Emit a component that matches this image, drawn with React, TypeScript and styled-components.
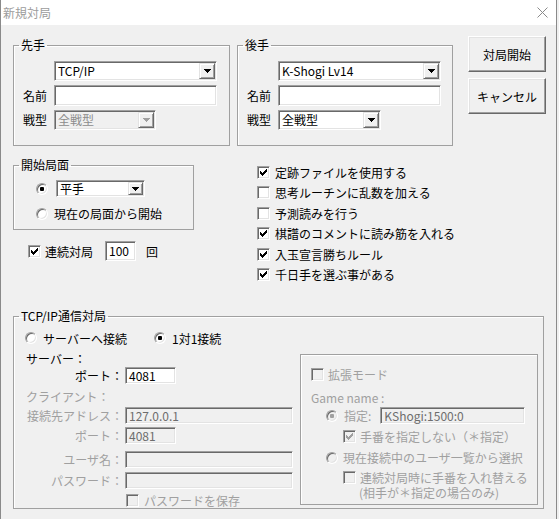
import React from 'react';
import styled, { createGlobalStyle } from 'styled-components';

const GlobalStyle = createGlobalStyle`
  html, body { margin: 0; padding: 0; background: #f0f0f0; }
  body {
    font-family: "Noto Sans CJK JP", "Noto Sans", sans-serif;
    font-size: 12px;
    color: #000;
  }
`;

const Window = styled.div`
  width: 557px;
  height: 519px;
  box-sizing: border-box;
  border-left: 1px solid #8a8a8a;
  border-right: 1px solid #8a8a8a;
  display: flex;
  flex-direction: column;
  background: #f0f0f0;
  overflow: hidden;
`;

const TitleBar = styled.div`
  height: 25px;
  flex: none;
  background: #fff;
  display: flex;
  align-items: center;
  justify-content: space-between;
  padding: 0 8px 0 2px;
`;

const TitleText = styled.span`
  color: #9c9c9c;
  font-size: 12px;
  line-height: 14px;
`;

const Body = styled.div`
  flex: 1;
  padding-left: 12px;
  display: flex;
  flex-direction: column;
`;

const Row = styled.div<{ $mt?: number; $gap?: number }>`
  display: flex;
  align-items: flex-start;
  margin-top: ${(p) => p.$mt ?? 0}px;
  gap: ${(p) => p.$gap ?? 0}px;
`;

const Column = styled.div<{ $mt?: number; $ml?: number; $w?: number }>`
  display: flex;
  flex-direction: column;
  margin-top: ${(p) => p.$mt ?? 0}px;
  margin-left: ${(p) => p.$ml ?? 0}px;
  ${(p) => (p.$w ? `width: ${p.$w}px;` : '')}
`;

const Group = styled.fieldset<{ $w: number; $mt?: number }>`
  margin: ${(p) => p.$mt ?? 0}px 0 0 0;
  padding: 0;
  min-width: 0;
  box-sizing: border-box;
  width: ${(p) => p.$w}px;
  border: 1px solid #a0a0a0;
  box-shadow: 1px 1px 0 #fff inset;
`;

const Legend = styled.legend`
  padding: 0 2px;
  margin-left: 5px;
  line-height: 14px;
  font-size: 12px;
`;

const PlayerGrid = styled.div`
  display: grid;
  grid-template-columns: 31px auto;
  row-gap: 4px;
  align-items: center;
  justify-items: start;
  padding: 9px 0 15px 9px;
`;

const Label = styled.span<{ $disabled?: boolean; $right?: boolean }>`
  line-height: 14px;
  white-space: nowrap;
  color: ${(p) => (p.$disabled ? '#a0a0a0' : '#000')};
  ${(p) => (p.$right ? 'justify-self: end;' : '')}
`;

const Sunken = styled.div<{ $w: number; $h: number; $disabled?: boolean }>`
  box-sizing: border-box;
  width: ${(p) => p.$w}px;
  height: ${(p) => p.$h}px;
  border: 1px solid;
  border-color: #a0a0a0 #fff #fff #a0a0a0;
  box-shadow: inset 1px 1px 0 #696969, inset -1px -1px 0 #e3e3e3;
  background: ${(p) => (p.$disabled ? '#f0f0f0' : '#fff')};
  display: flex;
  align-items: stretch;
  padding: 1px;
  flex: none;
`;

const FieldValue = styled.span<{ $disabled?: boolean; $muted?: boolean }>`
  flex: 1;
  display: flex;
  align-items: center;
  padding-left: 2px;
  white-space: nowrap;
  color: ${(p) => (p.$muted ? '#8c8c8c' : p.$disabled ? '#6d6d6d' : '#000')};
  line-height: 12px;
`;

const ArrowButton = styled.span<{ $w: number }>`
  width: ${(p) => p.$w}px;
  box-sizing: border-box;
  border: 1px solid;
  border-color: #e3e3e3 #696969 #696969 #e3e3e3;
  box-shadow: inset 1px 1px 0 #fff, inset -1px -1px 0 #a0a0a0;
  background: #f0f0f0;
  display: flex;
  align-items: center;
  justify-content: center;
`;

const Combo = ({ w, h, value, disabled, bw = 16 }: { w: number; h: number; value: string; disabled?: boolean; bw?: number }) => (
  <Sunken $w={w} $h={h} $disabled={disabled}>
    <FieldValue $muted={disabled}>{value}</FieldValue>
    <ArrowButton $w={bw}>
      <svg width="7" height="4" viewBox="0 0 7 4" shapeRendering="crispEdges">
        <polygon points="0,0 7,0 3.5,4" fill={disabled ? '#a0a0a0' : '#000'} />
      </svg>
    </ArrowButton>
  </Sunken>
);

const TextBox = ({ w, h, value = '', disabled }: { w: number; h: number; value?: string; disabled?: boolean }) => (
  <Sunken $w={w} $h={h} $disabled={disabled}>
    <FieldValue $disabled={disabled}>{value}</FieldValue>
  </Sunken>
);

const PushButton = styled.button`
  width: 78px;
  height: 36px;
  box-sizing: border-box;
  background: #f0f0f0;
  border: 1px solid;
  border-color: #fff #696969 #696969 #fff;
  box-shadow: inset -1px -1px 0 #a0a0a0, inset 1px 1px 0 #e3e3e3;
  font-family: inherit;
  font-size: 12px;
  color: #000;
  padding: 0;
`;

const ButtonColumn = styled.div`
  display: flex;
  flex-direction: column;
  gap: 6px;
  margin-top: 11px;
  margin-left: 15px;
`;

const CheckBoxBox = styled.span<{ $disabled?: boolean }>`
  width: 13px;
  height: 13px;
  box-sizing: border-box;
  flex: none;
  border: 1px solid;
  border-color: #a0a0a0 #fff #fff #a0a0a0;
  box-shadow: inset 1px 1px 0 #696969, inset -1px -1px 0 #e3e3e3;
  background: ${(p) => (p.$disabled ? '#f0f0f0' : '#fff')};
  display: flex;
  align-items: center;
  justify-content: center;
`;

const Check = ({ checked, disabled }: { checked?: boolean; disabled?: boolean }) => (
  <CheckBoxBox $disabled={disabled}>
    {checked && (
      <svg width="7" height="7" viewBox="0 0 7 7" shapeRendering="crispEdges">
        {[2, 3, 4, 3, 2, 1, 0].map((y, x) => (
          <rect key={x} x={x} y={y} width="1" height="3" fill={disabled ? '#a0a0a0' : '#000'} />
        ))}
      </svg>
    )}
  </CheckBoxBox>
);

const RadioCircle = styled.span<{ $disabled?: boolean }>`
  width: 12px;
  height: 12px;
  box-sizing: border-box;
  flex: none;
  border-radius: 50%;
  border: 1px solid;
  border-color: #a0a0a0 #fff #fff #a0a0a0;
  box-shadow: inset 1px 1px 0 #696969, inset -1px -1px 0 #e3e3e3;
  background: ${(p) => (p.$disabled ? '#f0f0f0' : '#fff')};
  display: flex;
  align-items: center;
  justify-content: center;
`;

const RadioDot = styled.span<{ $disabled?: boolean }>`
  width: 4px;
  height: 4px;
  border-radius: 1px;
  background: ${(p) => (p.$disabled ? '#a0a0a0' : '#000')};
`;

const Radio = ({ checked, disabled }: { checked?: boolean; disabled?: boolean }) => (
  <RadioCircle $disabled={disabled}>{checked && <RadioDot $disabled={disabled} />}</RadioCircle>
);

const OptionRow = styled.div<{ $h?: number; $mt?: number; $ml?: number; $gap?: number }>`
  display: flex;
  align-items: center;
  height: ${(p) => p.$h ?? 14}px;
  margin-top: ${(p) => p.$mt ?? 0}px;
  margin-left: ${(p) => p.$ml ?? 0}px;
  gap: ${(p) => p.$gap ?? 5}px;
  white-space: nowrap;
`;

const Spacer = styled.span<{ $w: number }>`
  display: flex;
  align-items: center;
  margin-left: ${(p) => p.$w}px;
`;

const StartInner = styled.div`
  display: flex;
  flex-direction: column;
  padding: 8px 0 7px 22px;
`;

const OptionList = styled.div`
  display: flex;
  flex-direction: column;
`;

const OptionItem = styled.div`
  display: flex;
  align-items: center;
  gap: 5px;
  height: 20.5px;
  white-space: nowrap;
`;

const TcpInner = styled.div`
  display: flex;
  align-items: flex-start;
  padding: 9px 4px 0 11px;
  height: 185px;
  box-sizing: border-box;
`;

const FormGrid = styled.div<{ $mt?: number }>`
  display: grid;
  grid-template-columns: 98px auto;
  column-gap: 2px;
  align-items: center;
  justify-items: start;
  margin-top: ${(p) => p.$mt ?? 0}px;
`;

const RadioOption = styled.div<{ $w?: number }>`
  display: flex;
  align-items: center;
  gap: 6px;
  ${(p) => (p.$w ? `width: ${p.$w}px;` : '')}
`;

const ExtBox = styled.div`
  width: 238px;
  height: 151px;
  box-sizing: border-box;
  border: 1px solid #a0a0a0;
  box-shadow: 1px 1px 0 #fff inset;
  margin: 22px 0 0 7px;
  padding: 13px 0 0 10px;
  display: flex;
  flex-direction: column;
  color: #a0a0a0;
`;

const GrayText = styled.span`
  color: #a0a0a0;
  line-height: 14px;
`;

const CheckItems = [
  { label: '定跡ファイルを使用する', checked: true },
  { label: '思考ルーチンに乱数を加える', checked: false },
  { label: '予測読みを行う', checked: false },
  { label: '棋譜のコメントに読み筋を入れる', checked: true },
  { label: '入玉宣言勝ちルール', checked: true },
  { label: '千日手を選ぶ事がある', checked: true },
];

const PlayerGroup = ({ title, combo, senkei, senkeiDisabled, senkeiW }: { title: string; combo: string; senkei: string; senkeiDisabled?: boolean; senkeiW: number }) => (
  <Group $w={title === '先手' ? 217 : 216}>
    <Legend>{title}</Legend>
    <PlayerGrid>
      <span />
      <Combo w={163} h={20} value={combo} />
      <Label>名前</Label>
      <TextBox w={163} h={21} />
      <Label>戦型</Label>
      <Combo w={senkeiW} h={20} value={senkei} disabled={senkeiDisabled} />
    </PlayerGrid>
  </Group>
);

export default function App() {
  return (
    <>
      <GlobalStyle />
      <Window>
        <TitleBar>
          <TitleText>新規対局</TitleText>
          <svg width="11" height="11" viewBox="0 0 11 11">
            <path d="M0.5 0.5 L10.5 10.5 M10.5 0.5 L0.5 10.5" stroke="#8a8a8a" strokeWidth="1" />
          </svg>
        </TitleBar>
        <Body>
          <Row>
            <Row $mt={13} $gap={7}>
              <PlayerGroup title="先手" combo="TCP/IP" senkei="全戦型" senkeiDisabled senkeiW={102} />
              <PlayerGroup title="後手" combo="K-Shogi Lv14" senkei="全戦型" senkeiW={103} />
            </Row>
            <ButtonColumn>
              <PushButton>対局開始</PushButton>
              <PushButton>キャンセル</PushButton>
            </ButtonColumn>
          </Row>

          <Row>
            <Column $w={181}>
              <Group $w={181} $mt={12}>
                <Legend>開始局面</Legend>
                <StartInner>
                  <OptionRow $h={17} $gap={8}>
                    <Radio checked />
                    <Combo w={89} h={17} value="平手" bw={15} />
                  </OptionRow>
                  <OptionRow $h={17} $mt={8} $gap={6}>
                    <Radio />
                    <span>現在の局面から開始</span>
                  </OptionRow>
                </StartInner>
              </Group>
              <OptionRow $h={20} $mt={11} $ml={15} $gap={4}>
                <Check checked />
                <span>連続対局</span>
                <Spacer $w={8}>
                  <TextBox w={31} h={20} value="100" />
                </Spacer>
                <Spacer $w={6}>回</Spacer>
              </OptionRow>
            </Column>
            <Column $mt={16} $ml={63}>
              <OptionList>
                {CheckItems.map((c) => (
                  <OptionItem key={c.label}>
                    <Check checked={c.checked} />
                    <span>{c.label}</span>
                  </OptionItem>
                ))}
              </OptionList>
            </Column>
          </Row>

          <Group $w={531} $mt={24}>
            <Legend>TCP/IP通信対局</Legend>
            <TcpInner>
              <Column $w={268}>
                <OptionRow $h={12} $gap={0}>
                  <RadioOption $w={129}>
                    <Radio />
                    <span>サーバーへ接続</span>
                  </RadioOption>
                  <RadioOption>
                    <Radio checked />
                    <span>1対1接続</span>
                  </RadioOption>
                </OptionRow>
                <OptionRow $mt={7} $ml={1}>
                  <span>サーバー：</span>
                </OptionRow>
                <FormGrid $mt={2}>
                  <Label $right>ポート：</Label>
                  <TextBox w={51} h={17} value="4081" />
                </FormGrid>
                <OptionRow $mt={6} $ml={1}>
                  <GrayText>クライアント：</GrayText>
                </OptionRow>
                <FormGrid $mt={3}>
                  <Label $right $disabled>接続先アドレス：</Label>
                  <TextBox w={168} h={17} value="127.0.0.1" disabled />
                </FormGrid>
                <FormGrid $mt={3}>
                  <Label $right $disabled>ポート：</Label>
                  <TextBox w={51} h={17} value="4081" disabled />
                </FormGrid>
                <FormGrid $mt={7}>
                  <Label $right $disabled>ユーザ名：</Label>
                  <TextBox w={168} h={17} disabled />
                </FormGrid>
                <FormGrid $mt={4}>
                  <Label $right $disabled>パスワード：</Label>
                  <TextBox w={168} h={17} disabled />
                </FormGrid>
                <FormGrid $mt={5}>
                  <span />
                  <OptionRow $h={13} $ml={1} $gap={5}>
                    <Check disabled />
                    <GrayText>パスワードを保存</GrayText>
                  </OptionRow>
                </FormGrid>
              </Column>
              <ExtBox>
                <OptionRow $h={13} $gap={4}>
                  <Check disabled />
                  <GrayText>拡張モード</GrayText>
                </OptionRow>
                <OptionRow $mt={10}>
                  <GrayText>Game name :</GrayText>
                </OptionRow>
                <OptionRow $h={17} $mt={2} $ml={15} $gap={6}>
                  <Radio checked disabled />
                  <GrayText>指定:</GrayText>
                  <Spacer $w={3}>
                    <TextBox w={145} h={17} value="KShogi:1500:0" disabled />
                  </Spacer>
                </OptionRow>
                <OptionRow $h={13} $mt={6} $ml={32} $gap={4}>
                  <Check checked disabled />
                  <GrayText>手番を指定しない（＊指定）</GrayText>
                </OptionRow>
                <OptionRow $h={14} $mt={8} $ml={15} $gap={5}>
                  <Radio disabled />
                  <GrayText>現在接続中のユーザ一覧から選択</GrayText>
                </OptionRow>
                <OptionRow $h={13} $mt={6} $ml={32} $gap={4}>
                  <Check disabled />
                  <GrayText>連続対局時に手番を入れ替える</GrayText>
                </OptionRow>
                <OptionRow $h={14} $mt={2} $ml={48}>
                  <GrayText>(相手が＊指定の場合のみ)</GrayText>
                </OptionRow>
              </ExtBox>
            </TcpInner>
          </Group>
        </Body>
      </Window>
    </>
  );
}
